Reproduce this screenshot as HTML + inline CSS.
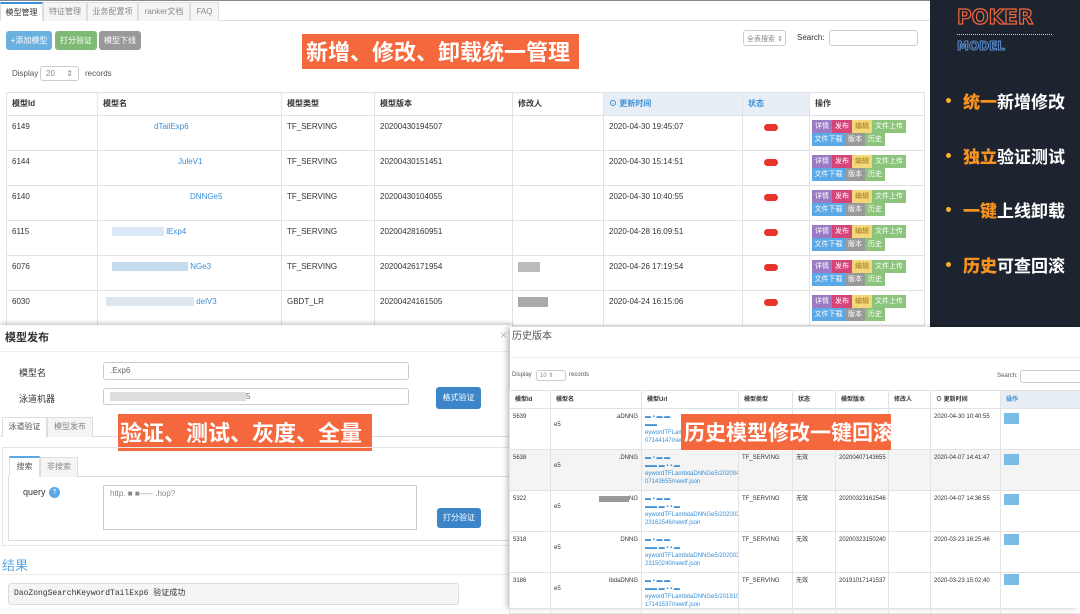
<!DOCTYPE html>
<html><head><meta charset="utf-8"><style>
*{box-sizing:border-box;margin:0;padding:0}
body{width:1080px;height:608px;overflow:hidden;position:relative;background:#fff;font-family:"Liberation Sans","Noto Sans CJK SC",sans-serif;font-size:8px;color:#333}
.a{position:absolute}
.tab{position:absolute;top:2px;height:19px;border:1px solid #ddd;border-bottom:none;background:#f5f5f5;color:#888;font-size:8px;line-height:18px;text-align:center}
.btn{position:absolute;top:31px;height:19px;border-radius:3px;color:#fff;font-size:8px;line-height:19px;text-align:center}
table{border-collapse:collapse;position:absolute;table-layout:fixed}
td,th{border:1px solid #e2e2e2;vertical-align:top;text-align:left;font-weight:normal;padding:6px 5px;font-size:8px;line-height:10px;overflow:hidden;white-space:nowrap}
th{font-weight:bold;vertical-align:middle;padding:0 5px;background:#fff}
.lnk{color:#3a8fd6}
.tg{display:inline-block;width:14px;height:7px;border-radius:4px;background:#e8342a;margin:2px 0 0 16px}
td.o{padding:4px 2px 0 2px}
.ops{position:relative;height:26px}
.ops span{position:absolute;height:13px;line-height:13px;color:#fff;font-size:7px;text-align:center}
.orange{position:absolute;background:#f5673c;color:#fff;font-weight:bold;font-family:"Noto Sans CJK SC",sans-serif;white-space:nowrap}
.bl{position:absolute;color:#fff;font-weight:bold;font-size:17px;font-family:"Noto Sans CJK SC",sans-serif;left:963px}
.bl b{color:#f7931e}
.dot{position:absolute;left:946px;width:5px;height:5px;border-radius:50%;background:#f7b32b}
.inp{position:absolute;border:1px solid #ccc;border-radius:3px;background:#fff;color:#888;font-size:8px;padding:3px 6px;white-space:nowrap;overflow:hidden}
.hb{position:absolute;height:11px;width:15px;background:#7bbbe8;left:1004px}
.r td{font-size:6px;padding:4px 3px;line-height:8px}
.r th{font-size:6px}
</style></head><body>
<div class="a" style="left:0;top:0;width:930px;height:1px;background:#888"></div>
<div class="a" style="left:0;top:20px;width:930px;height:1px;background:#ddd"></div>
<div class="tab" style="left:0;width:43px;background:#fff;color:#333;border-top:2px solid #3a8fd6">模型管理</div>
<div class="tab" style="left:43px;width:44px">特征管理</div>
<div class="tab" style="left:87px;width:51px">业务配置项</div>
<div class="tab" style="left:138px;width:52px">ranker文档</div>
<div class="tab" style="left:190px;width:29px">FAQ</div>
<div class="btn" style="left:6px;width:46px;background:#6bb1e0">+添加模型</div>
<div class="btn" style="left:55px;width:42px;background:#7fba75">打分验证</div>
<div class="btn" style="left:99px;width:42px;background:#999">模型下线</div>
<div class="orange" style="left:302px;top:34px;width:277px;height:35px;font-size:22px;line-height:35px;padding-left:4px">新增、修改、卸载统一管理</div>
<div class="a" style="left:12px;top:69px;color:#555">Display</div>
<div class="inp" style="left:40px;top:66px;width:39px;height:15px;padding:2px 5px">20 <span style="float:right">⇕</span></div>
<div class="a" style="left:85px;top:69px;color:#555">records</div>
<div class="inp" style="left:743px;top:30px;width:43px;height:16px;padding:3px 3px;font-size:7px">全表搜索 ⇕</div>
<div class="a" style="left:797px;top:33px;color:#333">Search:</div>
<div class="inp" style="left:829px;top:30px;width:89px;height:16px"></div>
<table style="left:6px;top:92px;width:919px">
<colgroup><col style="width:91px"><col style="width:184px"><col style="width:93px"><col style="width:138px"><col style="width:91px"><col style="width:139px"><col style="width:67px"><col></colgroup>
<tr style="height:23px"><th>模型Id</th><th>模型名</th><th>模型类型</th><th>模型版本</th><th>修改人</th><th style="background:#e8eef5;color:#3a8fd6">⊙ 更新时间</th><th style="background:#e8eef5;color:#3a8fd6">状态</th><th>操作</th></tr>
<tr style="height:35px"><td>6149</td><td style="padding-left:56px" class="lnk">dTailExp6</td><td>TF_SERVING</td><td>20200430194507</td><td></td><td>2020-04-30 19:45:07</td><td><i class="tg"></i></td><td class="o"><div class="ops"><span style="left:0;width:20px;background:#9b7cc4">详情</span><span style="left:20px;width:20px;background:#d6457a">发布</span><span style="left:40px;width:20px;background:#f4d779;color:#a07b20">编辑</span><span style="left:60px;width:34px;background:#8cc47c">文件上传</span><span style="left:0;top:13px;width:33px;background:#5aa9e6">文件下载</span><span style="left:33px;top:13px;width:20px;background:#999">版本</span><span style="left:53px;top:13px;width:20px;background:#8cc47c">历史</span></div></td></tr>
<tr style="height:35px"><td>6144</td><td style="padding-left:80px" class="lnk">JuleV1</td><td>TF_SERVING</td><td>20200430151451</td><td></td><td>2020-04-30 15:14:51</td><td><i class="tg"></i></td><td class="o"><div class="ops"><span style="left:0;width:20px;background:#9b7cc4">详情</span><span style="left:20px;width:20px;background:#d6457a">发布</span><span style="left:40px;width:20px;background:#f4d779;color:#a07b20">编辑</span><span style="left:60px;width:34px;background:#8cc47c">文件上传</span><span style="left:0;top:13px;width:33px;background:#5aa9e6">文件下载</span><span style="left:33px;top:13px;width:20px;background:#999">版本</span><span style="left:53px;top:13px;width:20px;background:#8cc47c">历史</span></div></td></tr>
<tr style="height:35px"><td>6140</td><td style="padding-left:92px" class="lnk">DNNGe5</td><td>TF_SERVING</td><td>20200430104055</td><td></td><td>2020-04-30 10:40:55</td><td><i class="tg"></i></td><td class="o"><div class="ops"><span style="left:0;width:20px;background:#9b7cc4">详情</span><span style="left:20px;width:20px;background:#d6457a">发布</span><span style="left:40px;width:20px;background:#f4d779;color:#a07b20">编辑</span><span style="left:60px;width:34px;background:#8cc47c">文件上传</span><span style="left:0;top:13px;width:33px;background:#5aa9e6">文件下载</span><span style="left:33px;top:13px;width:20px;background:#999">版本</span><span style="left:53px;top:13px;width:20px;background:#8cc47c">历史</span></div></td></tr>
<tr style="height:35px"><td>6115</td><td style="padding-left:14px" class="lnk"><span style="background:#dbe8f5;color:transparent">xxxxxxxxxxxxx</span>     lExp4</td><td>TF_SERVING</td><td>20200428160951</td><td></td><td>2020-04-28 16:09:51</td><td><i class="tg"></i></td><td class="o"><div class="ops"><span style="left:0;width:20px;background:#9b7cc4">详情</span><span style="left:20px;width:20px;background:#d6457a">发布</span><span style="left:40px;width:20px;background:#f4d779;color:#a07b20">编辑</span><span style="left:60px;width:34px;background:#8cc47c">文件上传</span><span style="left:0;top:13px;width:33px;background:#5aa9e6">文件下载</span><span style="left:33px;top:13px;width:20px;background:#999">版本</span><span style="left:53px;top:13px;width:20px;background:#8cc47c">历史</span></div></td></tr>
<tr style="height:35px"><td>6076</td><td style="padding-left:14px" class="lnk"><span style="background:#c5dcf0;color:transparent">xxxxxxxxxxxxxxxxxxx</span> NGe3</td><td>TF_SERVING</td><td>20200426171954</td><td><span style="display:inline-block;width:22px;height:10px;background:#bbb"></span></td><td>2020-04-26 17:19:54</td><td><i class="tg"></i></td><td class="o"><div class="ops"><span style="left:0;width:20px;background:#9b7cc4">详情</span><span style="left:20px;width:20px;background:#d6457a">发布</span><span style="left:40px;width:20px;background:#f4d779;color:#a07b20">编辑</span><span style="left:60px;width:34px;background:#8cc47c">文件上传</span><span style="left:0;top:13px;width:33px;background:#5aa9e6">文件下载</span><span style="left:33px;top:13px;width:20px;background:#999">版本</span><span style="left:53px;top:13px;width:20px;background:#8cc47c">历史</span></div></td></tr>
<tr style="height:35px"><td>6030</td><td style="padding-left:8px" class="lnk"><span style="background:#dde6ef;color:transparent">xxxxxxxxxxxxxxxxxxxxxx</span> delV3</td><td>GBDT_LR</td><td>20200424161505</td><td><span style="display:inline-block;width:30px;height:10px;background:#aaa"></span></td><td>2020-04-24 16:15:06</td><td><i class="tg"></i></td><td class="o"><div class="ops"><span style="left:0;width:20px;background:#9b7cc4">详情</span><span style="left:20px;width:20px;background:#d6457a">发布</span><span style="left:40px;width:20px;background:#f4d779;color:#a07b20">编辑</span><span style="left:60px;width:34px;background:#8cc47c">文件上传</span><span style="left:0;top:13px;width:33px;background:#5aa9e6">文件下载</span><span style="left:33px;top:13px;width:20px;background:#999">版本</span><span style="left:53px;top:13px;width:20px;background:#8cc47c">历史</span></div></td></tr>
</table>
<div class="a" style="left:930px;top:0;width:150px;height:327px;background:#1d2430"></div>
<div class="a" style="left:957px;top:5px;font:bold 20px 'DejaVu Sans',sans-serif;color:transparent;-webkit-text-stroke:1.2px #f4663c">POKER</div>
<div class="a" style="left:957px;top:34px;width:95px;border-top:1px dotted #ccd"></div>
<div class="a" style="left:957px;top:39px;font:bold 12px 'DejaVu Sans',sans-serif;color:transparent;-webkit-text-stroke:1px #5b8fd0">MODEL</div>
<div class="dot" style="top:98px"></div><div class="bl" style="top:88px"><b>统一</b>新增修改</div>
<div class="dot" style="top:153px"></div><div class="bl" style="top:143px"><b>独立</b>验证测试</div>
<div class="dot" style="top:207px"></div><div class="bl" style="top:197px"><b>一键</b>上线卸载</div>
<div class="dot" style="top:262px"></div><div class="bl" style="top:252px"><b>历史</b>可查回滚</div>
<div class="a" style="left:0;top:325px;width:512px;height:283px;background:#fff;box-shadow:0 -2px 4px rgba(0,0,0,.2)"></div>
<div class="a" style="left:5px;top:329px;font-size:11px;font-weight:bold">模型发布</div>
<div class="a" style="left:500px;top:328px;font-size:12px;color:#bbb">×</div>
<div class="a" style="left:0;top:351px;width:510px;height:1px;background:#eee"></div>
<div class="a" style="left:19px;top:366px;font-size:9px">模型名</div>
<div class="inp" style="left:103px;top:362px;width:306px;height:18px;color:#666">                                          .Exp6</div>
<div class="a" style="left:19px;top:392px;font-size:9px">泳道机器</div>
<div class="inp" style="left:103px;top:388px;width:306px;height:17px;color:#666"><span style="background:#ddd;color:transparent">xxxxxxxxxxxxxxxxxxxxxxxxxxxxxxxxxx</span>5</div>
<div class="a" style="left:436px;top:387px;width:45px;height:22px;background:#3d85c9;border-radius:3px;color:#fff;text-align:center;line-height:22px">格式验证</div>
<div class="a" style="left:0;top:436px;width:510px;height:1px;background:#ddd"></div>
<div class="tab" style="left:2px;top:417px;width:45px;height:20px;background:#fff;color:#555">泳道验证</div>
<div class="tab" style="left:47px;top:417px;width:46px;height:20px">模型发布</div>
<div class="orange" style="left:118px;top:414px;width:254px;height:37px;font-size:22px;line-height:37px;padding-left:2px">验证、测试、灰度、全量</div>
<div class="a" style="left:2px;top:447px;width:508px;height:99px;border:1px solid #e5e5e5"></div>
<div class="a" style="left:8px;top:476px;width:502px;height:1px;background:#ddd"></div>
<div class="tab" style="left:9px;top:456px;width:31px;height:21px;background:#fff;color:#555;border-top:2px solid #5aa9e6">搜索</div>
<div class="tab" style="left:40px;top:457px;width:38px;height:20px">非搜索</div>
<div class="a" style="left:8px;top:476px;width:1px;height:64px;background:#ddd"></div>
<div class="a" style="left:8px;top:540px;width:502px;height:1px;background:#ddd"></div>
<div class="a" style="left:23px;top:487px;font-size:9px">query</div>
<div class="a" style="left:49px;top:487px;width:11px;height:11px;border-radius:50%;background:#5aa9e6;color:#fff;font-size:7px;text-align:center;line-height:11px">?</div>
<div class="inp" style="left:103px;top:485px;width:314px;height:45px;border-radius:0;color:#888">http.                           ■ ■-----                  .hop?</div>
<div class="a" style="left:437px;top:508px;width:44px;height:20px;background:#3d85c9;border-radius:3px;color:#fff;text-align:center;line-height:20px">打分验证</div>
<div class="a" style="left:2px;top:555px;font-size:13px;color:#5aa9e6">结果</div>
<div class="a" style="left:0;top:574px;width:510px;height:1px;background:#eee"></div>
<div class="a" style="left:8px;top:583px;width:451px;height:22px;background:#f5f5f5;border:1px solid #ddd;border-radius:3px;font-family:'Liberation Mono','Noto Sans CJK SC',monospace;font-size:8px;line-height:20px;padding-left:5px">DaoZongSearchKeywordTailExp6 验证成功</div>
<div class="a" style="left:510px;top:327px;width:570px;height:281px;background:#fff;box-shadow:-3px 0 5px rgba(0,0,0,.25)"></div>
<div class="a" style="left:512px;top:327px;font-size:10px;color:#555">历史版本</div>
<div class="a" style="left:510px;top:357px;width:570px;height:1px;background:#eee"></div>
<div class="a" style="left:512px;top:372px;font-size:6px;color:#555">Display</div>
<div class="inp" style="left:536px;top:370px;width:30px;height:11px;padding:1px 3px;font-size:6px">10 ⇕</div>
<div class="a" style="left:569px;top:372px;font-size:6px;color:#555">records</div>
<div class="a" style="left:997px;top:373px;font-size:6px;color:#555">Search:</div>
<div class="inp" style="left:1020px;top:370px;width:70px;height:13px"></div>
<table class="r" style="left:509px;top:390px;width:580px">
<colgroup><col style="width:41px"><col style="width:91px"><col style="width:97px"><col style="width:54px"><col style="width:43px"><col style="width:53px"><col style="width:42px"><col style="width:70px"><col></colgroup>
<tr style="height:18px"><th>模型Id</th><th>模型名</th><th>模型Url</th><th>模型类型</th><th>状态</th><th>模型版本</th><th>修改人</th><th>⊙ 更新时间</th><th style="background:#e8eef5;color:#3a8fd6">操作</th></tr>
<tr style="height:41px"><td>5639</td><td style="text-align:right">.aDNNG<br><span style="float:left">e5</span></td><td class="lnk">▬ ▪ ▬ ▬<br>▬▬<br>eywordTFLam<br>07144147/new</td><td></td><td></td><td></td><td></td><td>2020-04-30 10:40:55</td><td></td></tr>
<tr style="height:41px;background:#f4f4f4"><td>5638</td><td style="text-align:right">.DNNG<br><span style="float:left">e5</span></td><td class="lnk">▬ ▪ ▬ ▬<br>▬▬ ▬ ▪ ▪ ▬<br>eywordTFLambdaDNNGe5/202004<br>07143655/newtf.json</td><td>TF_SERVING</td><td>无效</td><td>20200407143655</td><td></td><td>2020-04-07 14:41:47</td><td></td></tr>
<tr style="height:40px"><td>5322</td><td style="text-align:right"><span style="background:#999;color:transparent">xxxxxxxxxx</span>NG<br><span style="float:left">e5</span></td><td class="lnk">▬ ▪ ▬ ▬<br>▬▬ ▬ ▪ ▪ ▬<br>eywordTFLambdaDNNGe5/202003<br>23162546/newtf.json</td><td>TF_SERVING</td><td>无效</td><td>20200323162546</td><td></td><td>2020-04-07 14:36:55</td><td></td></tr>
<tr style="height:40px"><td>5318</td><td style="text-align:right">DNNG<br><span style="float:left">e5</span></td><td class="lnk">▬ ▪ ▬ ▬<br>▬▬ ▬ ▪ ▪ ▬<br>eywordTFLambdaDNNGe5/202003<br>23150240/newtf.json</td><td>TF_SERVING</td><td>无效</td><td>20200323150240</td><td></td><td>2020-03-23 16:25:46</td><td></td></tr>
<tr style="height:40px"><td>3186</td><td style="text-align:right">ibdaDNNG<br><span style="float:left">e5</span></td><td class="lnk">▬ ▪ ▬ ▬<br>▬▬ ▬ ▪ ▪ ▬<br>eywordTFLambdaDNNGe5/201910<br>17141537/newtf.json</td><td>TF_SERVING</td><td>无效</td><td>20191017141537</td><td></td><td>2020-03-23 15:02:40</td><td></td></tr>
</table>
<div class="hb" style="top:413px"></div><div class="hb" style="top:454px"></div><div class="hb" style="top:494px"></div><div class="hb" style="top:534px"></div><div class="hb" style="top:574px"></div>
<div class="orange" style="left:681px;top:414px;width:210px;height:36px;font-size:21px;line-height:36px;padding-left:3px">历史模型修改一键回滚</div>
</body></html>
